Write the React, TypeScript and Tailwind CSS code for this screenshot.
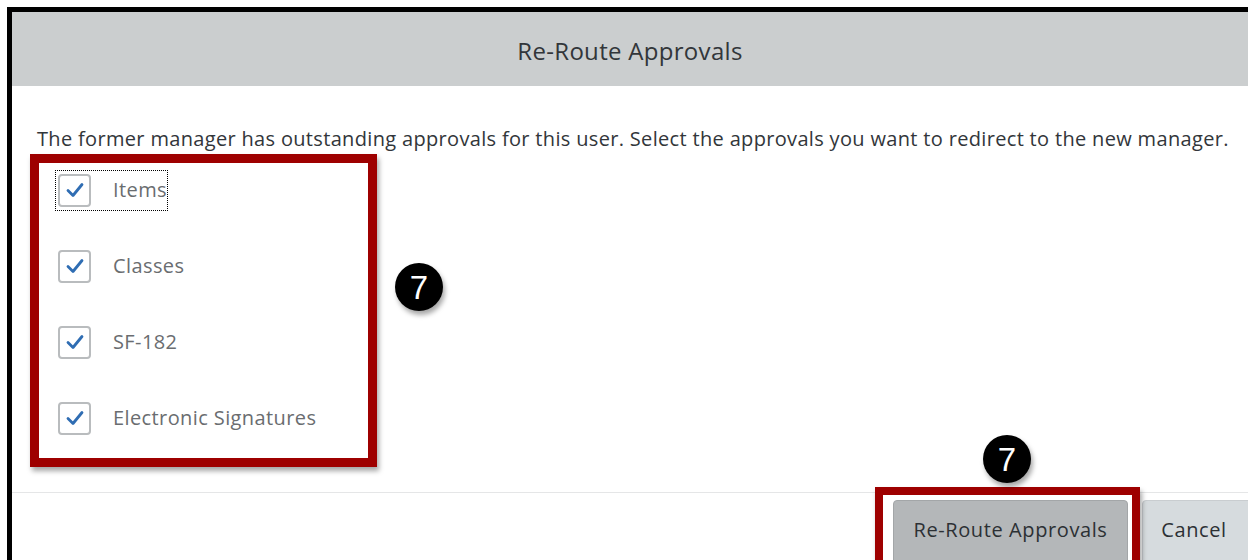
import React from "react";

const font = { fontFamily: '"Open Sans", "Noto Sans", sans-serif' };

function CheckBox() {
  return (
    <span className="flex h-[33px] w-[33px] shrink-0 items-center justify-center rounded-[4px] border-2 border-[#b9bcbe] bg-white">
      <svg width="22" height="22" viewBox="0 0 22 22">
        <path
          d="M4 11.5 L9 16.5 L18 5.5"
          fill="none"
          stroke="#2f6db3"
          strokeWidth="2.8"
          strokeLinecap="round"
          strokeLinejoin="round"
        />
      </svg>
    </span>
  );
}

function Badge({ className }: { className: string }) {
  return (
    <div
      className={`absolute flex h-[48px] w-[48px] items-center justify-center rounded-full bg-black text-[33px] leading-none text-white shadow-[2px_4px_5px_rgba(0,0,0,0.35)] ${className}`}
      style={{ fontFamily: '"Liberation Sans", Arial, sans-serif' }}
    >
      7
    </div>
  );
}

const items = ["Items", "Classes", "SF-182", "Electronic Signatures"];

export default function App() {
  return (
    <div className="relative h-[560px] w-[1248px] overflow-hidden bg-white pl-[7px] pt-[7px]" style={font}>
      <div className="flex h-full flex-col border-l-[5px] border-t-[5px] border-black">
        {/* dialog header */}
        <div className="flex h-[74px] shrink-0 items-center justify-center bg-[#cbcecf] pt-[3px] text-[24px] tracking-[0.3px] text-[#32363a]">
          Re-Route Approvals
        </div>

        {/* dialog body */}
        <div className="flex-1 pl-[25px] pt-[39px]">
          <p className="whitespace-nowrap text-[20px] leading-[28px] tracking-[0.33px] text-[#32363a]">
            The former manager has outstanding approvals for this user. Select the approvals you want to redirect to the new manager.
          </p>
          <div className="-mt-px ml-[21px] flex flex-col">
            {items.map((label, i) => (
              <div key={label} className="flex h-[76px] items-center">
                <div
                  className={`flex items-center gap-[22px] ${
                    i === 0 ? "-ml-[3px] border border-dotted border-black py-[3px] pl-[2px]" : ""
                  }`}
                >
                  <CheckBox />
                  <span className="text-[20px] leading-[28px] tracking-[0.4px] text-[#6a6d70]">{label}</span>
                </div>
              </div>
            ))}
          </div>
        </div>

        {/* dialog footer */}
        <div className="-mr-[4px] flex h-[68px] shrink-0 justify-end gap-[14px] border-t border-[#e5e6e7] pt-[7px]">
          <button className="h-[70px] w-[235px] rounded-[4px] border border-[#a3a6a8] bg-[#b4b7b9] pb-[10px] text-[20px] tracking-[0.6px] text-[#2c3034]">
            Re-Route Approvals
          </button>
          <button className="h-[70px] w-[110px] rounded-[4px] border border-[#c9cdd0] bg-[#d6dbde] pb-[10px] pr-[6px] text-[20px] tracking-[0.6px] text-[#2c3034]">
            Cancel
          </button>
        </div>
      </div>

      {/* callout frames */}
      <div className="absolute left-[30px] top-[154px] h-[313px] w-[347px] border-[9px] border-[#9e0000] shadow-[2px_4px_5px_rgba(0,0,0,0.35)]" />
      <div className="absolute left-[875px] top-[487px] h-[90px] w-[265px] border-[8px] border-[#9e0000] shadow-[2px_4px_5px_rgba(0,0,0,0.35)]" />
      <Badge className="left-[395px] top-[263px]" />
      <Badge className="left-[983px] top-[435px]" />
    </div>
  );
}
